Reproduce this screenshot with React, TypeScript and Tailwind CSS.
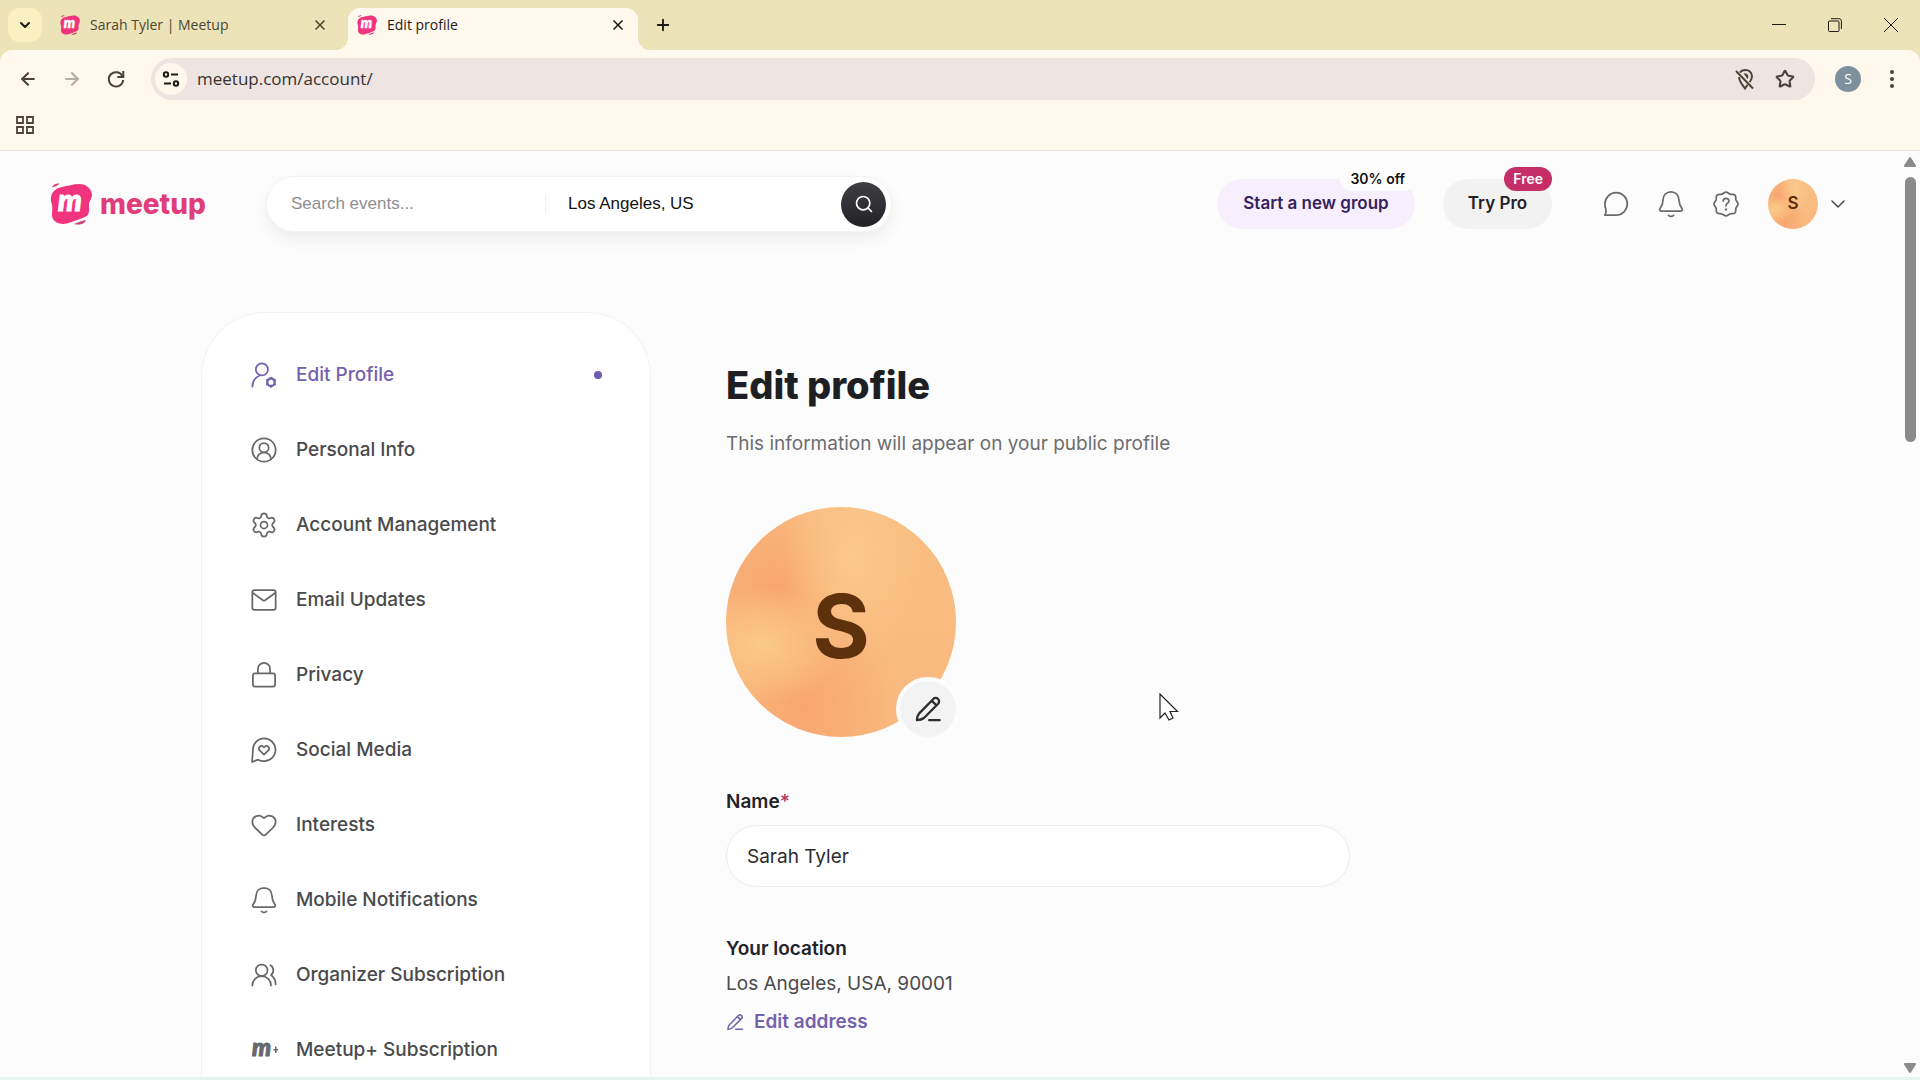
import type { ReactNode } from 'react';
import { ArrowLeft, ArrowRight, ChevronDown, CircleUserRound, Heart, Plus, Search, Settings, Star, UsersRound, X } from 'lucide-react';

type IconProps = { className?: string; strokeWidth?: number; children?: ReactNode };

const Line = ({ className = 'size-7', strokeWidth = 1.5, children }: IconProps) => (
  <svg
    viewBox="0 0 24 24"
    fill="none"
    stroke="currentColor"
    strokeWidth={strokeWidth}
    strokeLinecap="round"
    strokeLinejoin="round"
    className={className}
    aria-hidden="true"
  >
    {children}
  </svg>
);

const UserCogIcon = () => (
  <Line>
    <circle cx="10.200" cy="7.200" r="5.200" />
    <path d="M2 22c.1-4.400 2.600-8 6.400-9.600" />
    <circle cx="18" cy="18.200" r="3.200" strokeWidth="2" />
    <path
      d="M18 14.200v.4M18 21.800v.4M14.500 16.200l.4.200M21.100 20l.4.200M14.500 20.200l.4-.2M21.100 16.400l.4-.2"
      strokeWidth="1.500"
    />
  </Line>
);

const MailIcon = () => (
  <Line>
    <rect x="2" y="3.500" width="20" height="17" rx="1.800" />
    <path d="m2.500 6 8.600 6.200a1.600 1.600 0 0 0 1.800 0L21.500 6" />
  </Line>
);

const LockIcon = () => (
  <Line>
    <rect x="2.500" y="10.500" width="19" height="11.500" rx="1.800" />
    <path d="M6.800 10.500V6.800a5.200 5.200 0 0 1 10.400 0v3.700" />
  </Line>
);

const ChatHeartIcon = () => (
  <Line>
    <path d="M1.800 22.300 2.500 12A9.700 9.700 0 1 1 12 21.500c-1.800 0-3.500-.4-5-1.200Z" />
    <path d="m12 16-3.700-3.600c-1.900-2.100.8-5.200 3.200-3.100l.5.4.5-.4c2.400-2.100 5.100 1 3.200 3.100Z" />
  </Line>
);

const BellIcon = () => (
  <Line>
    <path d="M12 1.500c-4.200 0-6.600 3-6.800 6.900-.1 3.800-1 5.500-2.600 7.500-.7 1 0 2.300 1.200 2.300h16.400c1.200 0 1.900-1.300 1.200-2.300-1.600-2-2.500-3.700-2.600-7.500-.2-3.900-2.600-6.900-6.800-6.900Z" />
    <path d="M9.800 21.700c1.300 1.100 3.100 1.100 4.400 0" />
  </Line>
);

const ChatIcon = () => (
  <Line>
    <path d="M2.500 21.500c1.300-1.900 1.400-3.200.8-5A9.600 9.600 0 0 1 2.500 12a9.600 9.600 0 1 1 9.600 9.500Z" />
  </Line>
);

const HelpIcon = () => (
  <Line>
    <path d="M12 1.800c1.600 0 2.300 1.500 3.700 1.900 1.500.3 3-.4 4 .7s.4 2.500.8 4c.4 1.300 1.800 2 1.800 3.600s-1.400 2.300-1.800 3.600c-.4 1.500.3 2.900-.8 4s-2.500.4-4 .8c-1.400.4-2.100 1.800-3.700 1.800s-2.300-1.400-3.700-1.800c-1.500-.4-2.900.3-4-.8s-.4-2.500-.8-4C3.100 14.300 1.700 13.600 1.700 12s1.400-2.300 1.800-3.600c.4-1.500-.3-2.900.8-4s2.500-.4 4-.7c1.400-.4 2.100-1.900 3.700-1.900Z" />
    <path d="M9.600 9.500c.1-3.300 5-3.100 4.900 0-.1 2-2.500 2-2.500 4" />
    <path d="M12 16.700v.1" strokeWidth="2" />
  </Line>
);

const PencilIcon = ({ className, strokeWidth }: IconProps) => (
  <Line className={className} strokeWidth={strokeWidth}>
    <path d="M2.500 21.500c.1-2.600.5-4 2-5.800L16.600 3.400a2.900 2.900 0 0 1 4.100 4.100L8.500 19.700c-1.700 1.400-3.300 1.800-6 1.800Z" />
    <path d="M15.500 5.200l3.400 3.300M13 21.500h9" />
  </Line>
);

const MeetupPlusIcon = () => (
  <svg viewBox="0 0 28 28" className="size-7 overflow-visible" fill="currentColor" aria-hidden="true">
    <text x="2" y="20" fontFamily="Lato, sans-serif" fontSize="24" fontWeight="900" fontStyle="italic" stroke="currentColor">
      m
    </text>
    <path d="M25 10.500h1.500V13H28v1.500h-1.500V17H25v-2.500h-1.500V13H25Z" />
  </svg>
);

const MeetupMark = ({ className = '' }: IconProps) => (
  <svg viewBox="0 0 42 42" className={`overflow-visible ${className}`} aria-hidden="true">
    <path
      d="M12 4C18 3 23 1 29 1c8 0 12 5 13 10 0 5-3 7-3 11 0 5 1 9-3 11.500C31 36 24 38 17 40.500 9 42 2 39 2 32c0-5 1-7-.5-12C-1 12 4 5 12 4Z"
      fill="#f0357e"
    />
    <path d="M2 4.500C3 1.500 6 0 9.500.5 8.500 2.500 5 3.500 2 4.500ZM24 41c4-2 7-3 12-4-1 4-7 5.500-12 4Z" fill="#cf4479" />
    <text x="8" y="28" fontFamily="Lato, sans-serif" fontSize="30" fontWeight="900" fontStyle="italic" fill="#fff" stroke="#fff">
      m
    </text>
  </svg>
);

const navItems = [
  { label: 'Edit Profile', icon: <UserCogIcon />, active: true },
  { label: 'Personal Info', icon: <CircleUserRound className="size-7" strokeWidth={1.5} /> },
  { label: 'Account Management', icon: <Settings className="size-7" strokeWidth={1.5} /> },
  { label: 'Email Updates', icon: <MailIcon /> },
  { label: 'Privacy', icon: <LockIcon /> },
  { label: 'Social Media', icon: <ChatHeartIcon /> },
  { label: 'Interests', icon: <Heart className="size-7" strokeWidth={1.5} /> },
  { label: 'Mobile Notifications', icon: <BellIcon /> },
  { label: 'Organizer Subscription', icon: <UsersRound className="size-7" strokeWidth={1.5} /> },
  { label: 'Meetup+ Subscription', icon: <MeetupPlusIcon /> },
];

const TabStrip = () => (
  <div className="flex h-[50px] items-end bg-[#ece3b9] pl-2 text-sm text-[#1d1b16]">
    <button aria-label="Search tabs" className="mb-2 flex size-[34px] items-center justify-center rounded-xl bg-[#fbf0c1]">
      <ChevronDown className="size-4" strokeWidth={3} />
    </button>
    <div className="flex h-[42px] w-[306px] items-center pr-5 pb-2 pl-[18px] text-[#4d4832]">
      <MeetupMark className="mr-[10px] size-5" />
      <span className="flex-1">Sarah Tyler | Meetup</span>
      <button aria-label="Close tab">
        <X className="size-4" strokeWidth={2.5} />
      </button>
    </div>
    <div className="relative flex h-[42px] w-[290px] items-center rounded-t-xl bg-[#fff8ec] pr-3 pb-2 pl-[9px]">
      <span className="absolute bottom-0 -left-3 size-3 bg-[radial-gradient(circle_at_0_0,transparent_12px,#fff8ec_12px)]" />
      <span className="absolute -right-3 bottom-0 size-3 bg-[radial-gradient(circle_at_100%_0,transparent_12px,#fff8ec_12px)]" />
      <MeetupMark className="mr-[10px] size-5" />
      <span className="flex-1">Edit profile</span>
      <button aria-label="Close tab">
        <X className="size-4" strokeWidth={2.5} />
      </button>
    </div>
    <button aria-label="New tab" className="mb-4 ml-4">
      <Plus className="size-[18px]" strokeWidth={2.5} />
    </button>
    <div className="mr-[22px] mb-[18px] ml-auto flex items-center gap-[42px]">
      <button aria-label="Minimize">
        <svg viewBox="0 0 14 14" className="size-[14px]" stroke="currentColor">
          <path d="M0 6.500h14" />
        </svg>
      </button>
      <button aria-label="Restore">
        <svg viewBox="0 0 14 14" className="size-[14px]" fill="none" stroke="currentColor">
          <rect x=".5" y="3" width="10.500" height="10.500" rx="1" />
          <path d="M3 .7h8a2.400 2.400 0 0 1 2.400 2.400V11" />
        </svg>
      </button>
      <button aria-label="Close window">
        <svg viewBox="0 0 14 14" className="size-[14px]" stroke="currentColor">
          <path d="m0 0 14 14M14 0 0 14" />
        </svg>
      </button>
    </div>
  </div>
);

const Toolbar = () => (
  <div className="bg-[#ece3b9]">
    <div className="rounded-t-xl border-b border-[#ece6d8] bg-[#fff8ec] pt-2 text-[#4a4538]">
      <div className="flex h-[42px] items-center pl-4">
        <button aria-label="Back">
          <ArrowLeft className="size-6 p-[2px]" strokeWidth={2.5} />
        </button>
        <button aria-label="Forward" className="ml-5 text-[#b3aea4]">
          <ArrowRight className="size-6 p-[2px]" strokeWidth={2.5} />
        </button>
        <button aria-label="Reload" className="ml-5">
          <svg viewBox="0 0 24 24" className="size-6" fill="none" stroke="currentColor" strokeWidth="2">
            <path d="M18.500 9.200A7.200 7.200 0 1 0 19.200 13" />
            <path d="M19.300 4v6h-6" />
          </svg>
        </button>
        <div className="ml-[23px] flex h-full flex-1 items-center rounded-full bg-[#eee4e1] pr-[18px] pl-1">
          <button aria-label="View site information" className="flex size-8 items-center justify-center rounded-full bg-[#fff8ec] text-[#1d1b16]">
            <svg viewBox="0 0 18 18" className="size-[18px]" fill="none" stroke="currentColor" strokeWidth="2">
              <circle cx="4" cy="4.500" r="2.200" />
              <path d="M9 4.500h7M2 13.500h7" />
              <circle cx="14" cy="13.500" r="2.200" />
            </svg>
          </button>
          <input
            aria-label="Address"
            defaultValue="meetup.com/account/"
            className="ml-[10px] flex-1 bg-transparent text-[17px] text-[#37332f] outline-none"
          />
          <button aria-label="Location blocked">
            <svg viewBox="0 0 24 24" className="size-6" fill="none" stroke="currentColor" strokeWidth="2">
              <path d="M7 5.500C8 4 10 3 12.500 3 16 3 19 5.500 19 9.200c0 2-1 4-2.300 6M14.500 17.800 12 21.500c-3-3.800-6-7.500-6-11.500M3 4l17 17.500" />
              <path d="M12.500 7.500a2 2 0 0 1 1.800 2.500Z" fill="currentColor" />
            </svg>
          </button>
          <button aria-label="Bookmark this tab" className="ml-4">
            <Star className="size-6 p-[2px]" strokeWidth={2.5} strokeLinejoin="miter" />
          </button>
        </div>
        <button aria-label="Profile" className="ml-5 flex size-[26px] items-center justify-center rounded-full bg-[#7d909d] text-sm text-white">
          S
        </button>
        <button aria-label="Menu" className="mr-4 ml-[19px]">
          <svg viewBox="0 0 24 24" className="size-6" fill="currentColor">
            <circle cx="12" cy="5" r="2" />
            <circle cx="12" cy="12" r="2" />
            <circle cx="12" cy="19" r="2" />
          </svg>
        </button>
      </div>
      <div className="flex h-[50px] items-center pl-4">
        <button aria-label="All bookmarks">
          <svg viewBox="0 0 18 18" className="size-[18px]" fill="none" stroke="currentColor" strokeWidth="1.800">
            <path d="M1 1h6v6H1zM11 1h6v6h-6zM1 11h6v6H1zM11 11h6v6h-6z" />
          </svg>
        </button>
      </div>
    </div>
  </div>
);

const avatarArt =
  'bg-[radial-gradient(ellipse_at_16%_60%,#fbca88_0%,transparent_30%),radial-gradient(ellipse_at_55%_22%,#fbca8c_0%,transparent_40%),radial-gradient(ellipse_at_34%_88%,#f8a670_0%,transparent_44%),radial-gradient(ellipse_at_22%_34%,#f8a671_0%,transparent_46%),linear-gradient(#f9bd82,#f9b97e)]';

const Header = () => (
  <header className="flex h-[106px] items-center px-[50px] text-[17px]">
    <a href="#home" className="flex w-[156px] items-center text-[28px] font-extrabold text-[#e23d7b]">
      <MeetupMark className="mr-2 size-[42px]" />
      meetup
    </a>
    <form className="ml-[60px] flex h-14 w-[626px] items-center rounded-full border border-[#f3f3f3] bg-white pr-[5px] pl-6 font-['Liberation_Sans',sans-serif] shadow-[0_8px_16px_rgba(0,0,0,0.06)]">
      <input aria-label="Search events" placeholder="Search events..." className="w-[254px] outline-none placeholder:text-[#8e8e92]" />
      <span className="h-5 w-px bg-[#f2f2f2]" />
      <input aria-label="Location" defaultValue="Los Angeles, US" className="ml-[22px] min-w-0 flex-1 text-[#121212] outline-none" />
      <button
        type="button"
        aria-label="Search"
        className="flex size-[45px] items-center justify-center rounded-full bg-linear-to-b from-[#3f3f43] to-[#232327] text-white"
      >
        <Search className="size-5" strokeWidth={2} />
      </button>
    </form>
    <div className="ml-auto flex items-center font-semibold">
      <button className="relative h-[50px] w-[198px] rounded-full bg-[#f7effd] text-[#36225c]">
        Start a new group
        <span className="absolute -top-3 right-0 rounded-full bg-[#fdfdfd] px-[10px] text-sm leading-6 text-[#121212]">30% off</span>
      </button>
      <button className="relative ml-7 h-[50px] w-[109px] rounded-full bg-[#f2f2f2] text-[#232327]">
        Try Pro
        <span className="absolute -top-3 right-0 rounded-full bg-[#c52e66] px-[9px] text-sm leading-6 text-white">Free</span>
      </button>
      <div className="ml-[50px] flex gap-[27px] text-[#6a6a6e]">
        <button aria-label="Messages">
          <ChatIcon />
        </button>
        <button aria-label="Notifications">
          <BellIcon />
        </button>
        <button aria-label="Help">
          <HelpIcon />
        </button>
      </div>
      <button aria-label="Account menu" className="ml-7 flex items-center gap-2">
        <span className={`flex size-[50px] items-center justify-center rounded-full text-[#5c310c] ${avatarArt}`}>S</span>
        <ChevronDown className="size-6 text-[#4a4a4e]" strokeWidth={1.5} />
      </button>
    </div>
  </header>
);

const Sidebar = () => (
  <nav className="w-[450px] shrink-0 rounded-t-[64px] border border-b-0 border-[#f2f2f2] bg-white px-12 pt-6 text-[19px] leading-[30px] font-medium">
    {navItems.map((item) => (
      <a
        key={item.label}
        href="#"
        className={`flex h-[75px] items-center gap-[18px] ${item.active ? 'text-[#7461ae]' : 'text-[#4a4a4c]'}`}
      >
        <span className={item.active ? 'flex' : 'flex text-[#68686c]'}>{item.icon}</span>
        {item.label}
        {item.active && <span className="ml-auto size-2 rounded-full bg-[#6f5bb0]" />}
      </a>
    ))}
  </nav>
);

const Profile = () => (
  <section className="ml-[75px] w-[624px] pt-[45px] text-[19px] text-[#4a4a4c]">
    <h1 className="text-[38px] leading-[56px] font-extrabold text-[#1e1f22]">Edit profile</h1>
    <p className="mt-4 leading-[30px] text-[#6d6d70]">This information will appear on your public profile</p>
    <div className={`relative mt-12 flex size-[230px] items-center justify-center rounded-full pt-2 text-[88px] font-bold text-[#5c310c] ${avatarArt}`}>
      S
      <button
        aria-label="Edit photo"
        className="absolute -right-1 -bottom-1 flex size-16 items-center justify-center rounded-full border-4 border-[#fdfdfd] bg-[#f3f3f4] text-[#2e2e31]"
      >
        <PencilIcon className="size-7" strokeWidth={2} />
      </button>
    </div>
    <label htmlFor="name" className="mt-[50px] block leading-[30px] font-semibold text-[#232327]">
      Name<span className="text-[#b8405e]">*</span>
    </label>
    <input
      id="name"
      defaultValue="Sarah Tyler"
      className="mt-2 h-[62px] w-full rounded-full border border-[#ececec] bg-white px-5 text-[#2c2c2e] outline-none"
    />
    <h2 className="mt-[47px] leading-[30px] font-semibold text-[#232327]">Your location</h2>
    <p className="mt-[5px] leading-[30px]">Los Angeles, USA, 90001</p>
    <button className="mt-2 flex items-center gap-[10px] leading-[30px] font-semibold text-[#7461ae]">
      <PencilIcon className="size-[18px]" strokeWidth={2} />
      Edit address
    </button>
  </section>
);

const ScrollBar = () => (
  <div className="flex w-5 flex-col items-center py-1 text-[#8b8b8b]">
    <svg viewBox="0 0 12 10" className="mt-[2px] h-[10px] w-3" fill="currentColor">
      <path d="M5 .8a1.200 1.200 0 0 1 2 0l4.800 7.400A1.200 1.200 0 0 1 11 10H1a1.200 1.200 0 0 1-.8-1.800Z" />
    </svg>
    <div className="mt-[10px] h-[265px] w-[11px] rounded-full bg-[#8b8b8b]" />
    <svg viewBox="0 0 12 10" className="mt-auto h-[10px] w-3 rotate-180" fill="currentColor">
      <path d="M5 .8a1.200 1.200 0 0 1 2 0l4.800 7.400A1.200 1.200 0 0 1 11 10H1a1.200 1.200 0 0 1-.8-1.800Z" />
    </svg>
  </div>
);

const Cursor = () => (
  <svg viewBox="0 0 20 28" className="pointer-events-none absolute top-[693px] left-[1159px] h-7 w-5" aria-hidden="true">
    <path d="M1 1v24l5-5 4 7 4-2-3-6.500h7.500Z" fill="#fff" stroke="#222" strokeWidth="1.200" />
  </svg>
);

export default function App() {
  return (
    <div className="relative flex h-screen flex-col overflow-hidden font-['Inter',sans-serif]">
      <div className="shrink-0 font-['Open_Sans',sans-serif]">
        <TabStrip />
        <Toolbar />
      </div>
      <div className="flex min-h-0 flex-1 bg-[#fcfcfc]">
        <div className="min-w-0 flex-1 overflow-hidden">
          <Header />
          <main className="mx-auto mt-[55px] flex max-w-[1498px]">
            <Sidebar />
            <Profile />
          </main>
        </div>
        <ScrollBar />
      </div>
      <div className="h-[3px] shrink-0 bg-[#e6f3f1]" />
      <Cursor />
    </div>
  );
}
